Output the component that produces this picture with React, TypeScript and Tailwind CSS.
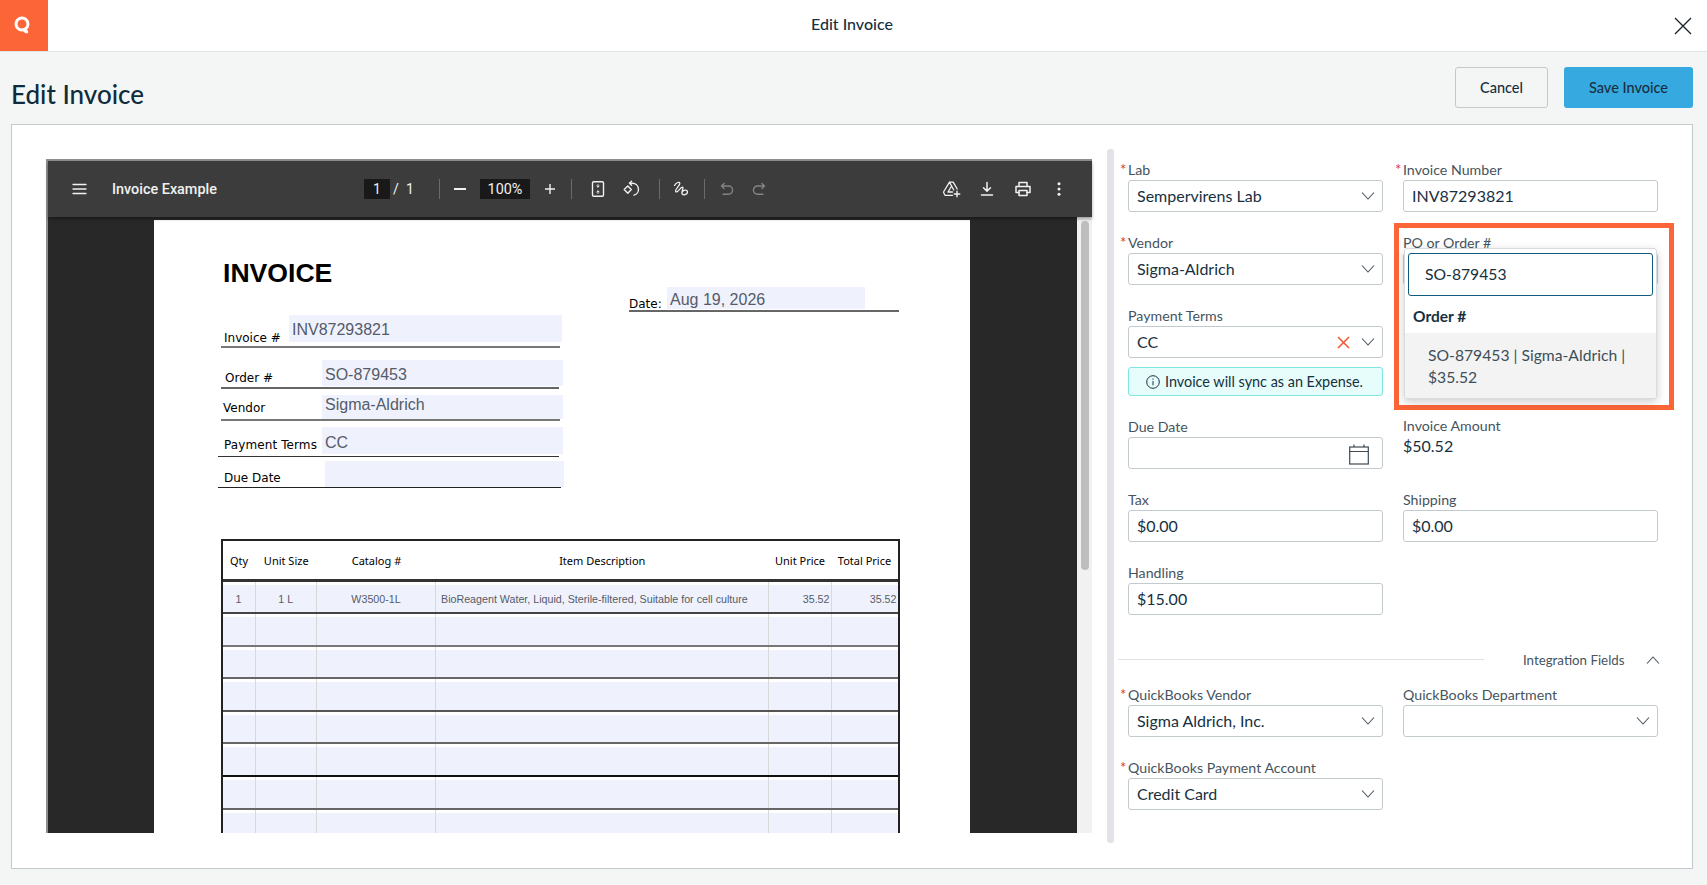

import React from "react";

const Chevron = ({ up = false }: { up?: boolean }) => (
  <svg width="14" height="8" viewBox="0 0 14 8" fill="none" stroke="#4a5760" strokeWidth="1.1" className="shrink-0">
    <polyline points={up ? "1,7.5 7,1 13,7.5" : "1,0.5 7,7 13,0.5"} />
  </svg>
);

const Field = ({ label, req, children }: { label: string; req?: boolean; children?: React.ReactNode }) => (
  <div className="flex flex-col">
    <div className="relative h-5 text-[14.2px] leading-5 text-[#46545e]">
      {req && <span className="absolute -left-[8px] -top-[1px] text-[15px] text-[#e1343f]">*</span>}
      {label}
    </div>
    {children}
  </div>
);

const Box = ({ value, chevron, children }: { value?: string; chevron?: boolean; children?: React.ReactNode }) => (
  <div className="flex h-8 items-center rounded-[3px] border border-[#c3cacd] bg-white pl-2 pr-[7px] text-[16px] text-[#17303f]">
    <span className="flex-1 truncate">{value}</span>
    {children}
    {chevron && <Chevron />}
  </div>
);

const Ico = ({ w = 18, cls = "", children }: { w?: number; cls?: string; children: React.ReactNode }) => (
  <svg width={w} height="18" viewBox={`0 0 ${w} 18`} fill="none" stroke="#f1f1f1" strokeWidth="1.4" strokeLinecap="round" strokeLinejoin="round" className={"shrink-0 " + cls}>
    {children}
  </svg>
);

const Sep = ({ cls }: { cls: string }) => <div className={"h-5 w-px bg-[#6a6a6a] " + cls} />;

const Toolbar = () => (
  <div className="relative z-10 flex h-[56px] shrink-0 items-center bg-[#3c3c3c] font-['Roboto',sans-serif] text-[14px] text-[#f1f1f1] shadow-[0_2px_3px_rgba(0,0,0,0.35)]">
    <Ico w={20} cls="ml-[22px]">
      <path d="M3 4.500h13M3 9h13M3 13.500h13" strokeWidth="1.3" />
    </Ico>
    <div className="ml-[22px] w-[252px] pt-px text-[14.400px] font-medium">Invoice Example</div>
    <div className="flex h-5 w-[26px] items-center justify-center bg-[#191919]">1</div>
    <div className="w-3 text-center">/</div>
    <div className="w-4 text-center">1</div>
    <Sep cls="ml-[21px]" />
    <div className="ml-[14px] h-[1.5px] w-3 bg-[#f1f1f1]" />
    <div className="ml-[14px] flex h-5 w-[50px] items-center justify-center bg-[#191919] pt-px text-[14.400px]">100%</div>
    <Ico w={12} cls="ml-[14px]">
      <path d="M1 9h10M6 4v10" strokeLinecap="butt" />
    </Ico>
    <Sep cls="ml-[15px]" />
    <Ico w={16} cls="ml-[18px]">
      <rect x="2.500" y="1.700" width="11" height="14.600" rx="1.200" />
      <path d="M8 4.600v2.400M6.800 6l1.200 1.200L9.200 6M8 13.400V11M6.800 12L8 10.800 9.200 12" strokeWidth="1" />
    </Ico>
    <Ico cls="ml-4">
      <path d="M5.800 6L9.300 9.600 5.800 13.200 2.200 9.600z" />
      <path d="M7.500 3.300h3a6 6 0 0 1 1.500 11.800" />
      <path d="M9.600 1.300L7.500 3.300l2.100 2" />
    </Ico>
    <Sep cls="ml-[19px]" />
    <Ico cls="ml-[13px]">
      <path d="M1.500 5.500C3 2.500 6.800 1.200 6.800 3.500 6.800 6 1.200 10 2.800 11.700 4.500 13.400 8.400 6 9.800 7.300c1.200 1.200-1.500 3.500-.8 6.200.6 2.300 5.500 1.300 5.500-1.500 0-2.500-4-2.500-5-.2" strokeWidth="1.300" />
    </Ico>
    <Sep cls="ml-[13px]" />
    <Ico w={16} cls="ml-[14px] opacity-40">
      <path d="M5 3.500L2.500 6 5 8.500M2.500 6h7a4 4 0 0 1 0 8.200H4" />
    </Ico>
    <Ico w={16} cls="ml-4 opacity-40">
      <path d="M11 3.500L13.500 6 11 8.500M13.500 6h-7a4 4 0 0 0 0 8.200H12" />
    </Ico>
    <div className="ml-auto flex items-center pr-[24px]">
      <Ico w={20}>
        <path d="M7.500 2.200h3.700L15.200 9M7.500 2.200L1.800 11.500a1.500 1.500 0 0 0 0 1.500l1.200 2.300h7.500M7.500 2.200L11.800 10M6 12h4.500M6 12l3-5" strokeWidth="1.300" />
        <path d="M15 11.200v5.600M12.200 14h5.600" />
      </Ico>
      <Ico cls="ml-[16px]">
        <path d="M9 2.500v8.500M5.500 7.700L9 11.200l3.500-3.500M3.500 15h11" strokeWidth="1.500" />
      </Ico>
      <Ico cls="ml-[18px]">
        <path d="M5 6V2.500h8V6M5 12.500H2V6.500h14v6h-3" strokeWidth="1.500" />
        <rect x="5" y="10.500" width="8" height="5" strokeWidth="1.500" />
      </Ico>
      <svg width="18" height="18" viewBox="0 0 18 18" fill="#f1f1f1" className="ml-[18px] shrink-0">
        <circle cx="9" cy="3.800" r="1.500" />
        <circle cx="9" cy="9" r="1.500" />
        <circle cx="9" cy="14.200" r="1.500" />
      </svg>
    </div>
  </div>
);

const docLabel = "font-['DejaVu_Sans',sans-serif] text-[12px] leading-none text-black";
const docValue = "font-['Liberation_Sans',sans-serif] text-[16px] leading-none text-[#555b68]";

const DocForm = () => (
  <div className="w-[346px] pt-[38px]">
    <div className="h-[30px] pl-[5px] font-['Liberation_Sans',sans-serif] text-[26.600px] font-bold leading-[30px] text-black">INVOICE</div>
    <div className="ml-[3px] mt-[27px] flex h-[33px] w-[339px] items-start border-b-2 border-[#777]">
      <div className={"w-[68px] pl-[3px] pt-[17px] " + docLabel}>Invoice #</div>
      <div className={"-mr-[2px] flex h-[27px] w-[273px] items-start bg-[#eff2fd] pl-[3px] pt-[7px] " + docValue}>INV87293821</div>
    </div>
    <div className="ml-[3px] mt-3 flex h-[29px] w-[338px] items-start border-b-2 border-[#666]">
      <div className={"w-[101px] pl-1 pt-[12px] " + docLabel}>Order #</div>
      <div className={"-mr-[4px] flex h-[26px] w-[241px] items-start bg-[#eff2fd] pl-[3px] pt-[7px] " + docValue}>SO-879453</div>
    </div>
    <div className="ml-[3px] mt-[6px] flex h-[26px] w-[339px] items-start border-b-2 border-[#777]">
      <div className={"w-[101px] pl-[2px] pt-[7px] " + docLabel}>Vendor</div>
      <div className={"-mr-[3px] flex h-6 w-[241px] items-start bg-[#eff2fd] pl-[3px] pt-[2px] " + docValue}>Sigma-Aldrich</div>
    </div>
    <div className="mt-[6px] flex h-[30px] w-[341px] items-start border-b-[1.5px] border-[#333]">
      <div className={"w-[104px] pl-[6px] pt-[12px] tracking-[0.1px] " + docLabel}>Payment Terms</div>
      <div className={"-mr-1 flex h-[27px] w-[241px] items-start bg-[#eff2fd] pl-[3px] pt-[8px] " + docValue}>CC</div>
    </div>
    <div className="mt-1 flex h-[26.500px] w-[343px] items-start border-b border-[#222]">
      <div className={"w-[107px] pl-[6px] pt-[11px] " + docLabel}>Due Date</div>
      <div className="-mr-[3px] h-[26px] w-[239px] bg-[#eff2fd]" />
    </div>
  </div>
);

const cols = "grid grid-cols-[33px_61.5px_119px_332.5px_63px_1fr]";
const cellBorder = "border-r border-[#d9d9d9] last:border-r-0";

const Row = ({ vals, line }: { vals?: string[]; line: string }) => (
  <div className={cols + " h-[32.600px] border-b-2 bg-white " + line}>
    {[0, 1, 2, 3, 4, 5].map((i) => (
      <div key={i} className={"pt-[3px] " + cellBorder}>
        <div
          className={
            "flex h-full items-center bg-[#eff2fd] pt-[2px] font-['Liberation_Sans',sans-serif] text-[10.700px] text-[#555b68] " +
            (i === 3 ? "justify-start pl-[5px]" : i > 3 ? "justify-end pr-px" : "justify-center")
          }
        >
          {vals ? vals[i] : ""}
        </div>
      </div>
    ))}
  </div>
);

const Table = () => (
  <div className="ml-[66.500px] mt-[51px] w-[679px] border-x-2 border-t-2 border-[#222]">
    <div className={cols + " h-[41px] items-center border-b-[3px] border-[#333] pt-[3px] font-['Noto_Sans',sans-serif] text-[11px] text-black"}>
      <div className="text-center">Qty</div>
      <div className="text-center">Unit Size</div>
      <div className="text-center">Catalog #</div>
      <div className="text-center">Item Description</div>
      <div className="text-center">Unit Price</div>
      <div className="text-center">Total Price</div>
    </div>
    <Row vals={["1", "1 L", "W3500-1L", "BioReagent Water, Liquid, Sterile-filtered, Suitable for cell culture", "35.52", "35.52"]} line="border-[#444]" />
    <Row line="border-[#777]" />
    <Row line="border-[#666]" />
    <Row line="border-[#555]" />
    <Row line="border-[#666]" />
    <Row line="border-[#111]" />
    <Row line="border-[#666]" />
    <Row line="border-[#666]" />
  </div>
);

const PdfViewer = () => (
  <div className="mt-[10px] flex h-[674px] w-[1046px] shrink-0 flex-col border-l-2 border-t-2 border-[#8e8e8e]">
    <Toolbar />
    <div className="flex min-h-0 flex-1">
      <div className="min-h-0 flex-1 overflow-hidden bg-[#282828] pl-[106px] pt-[3px]">
        <div className="h-[800px] w-[816px] bg-white">
          <div className="flex pl-16">
            <DocForm />
            <div className="ml-[65px] flex h-[92px] w-[270px] items-start pt-[67px]">
              <div className="flex h-[25px] w-full items-start border-b-2 border-[#666]">
                <div className={"w-[38px] pt-[11px] " + docLabel}>Date:</div>
                <div className={"flex h-[22px] w-[198px] items-start bg-[#eff2fd] pl-[3px] pt-[5px] " + docValue}>Aug 19, 2026</div>
              </div>
            </div>
          </div>
          <Table />
        </div>
      </div>
      <div className="w-[15px] shrink-0 bg-[#f1f1f1] pl-1 pt-1">
        <div className="h-[349px] w-2 rounded-[4px] bg-[#bdbdbd]" />
      </div>
    </div>
  </div>
);

const Form = () => (
  <div className="ml-[14px] w-[530px] pt-[11px]">
    <div className="grid grid-cols-[255px_255px] gap-x-5 gap-y-[21px]">
      <Field label="Lab" req>
        <Box value="Sempervirens Lab" chevron />
      </Field>
      <Field label="Invoice Number" req>
        <Box value="INV87293821" />
      </Field>
      <Field label="Vendor" req>
        <Box value="Sigma-Aldrich" chevron />
      </Field>
      <div className="relative">
        <Field label="PO or Order #">
          <Box />
        </Field>
        <div className="absolute -left-[9px] -top-[10px] h-[187px] w-[280px] border-[5px] border-[#fb6538]" />
        <div className="absolute left-px top-[15px] w-[253px] overflow-hidden rounded-[3px] border border-[#d8dcde] bg-white shadow-[0_3px_10px_rgba(0,0,0,0.2)]">
          <div className="mx-[3px] mt-1 flex h-[43px] items-center rounded-[3px] border border-[#0f5b80] pl-4 text-[15.700px] text-[#17303f]">SO-879453</div>
          <div className="flex h-[37px] items-center pl-2 pt-[4px] text-[15.500px] font-bold text-[#17303f]">Order #</div>
          <div className="h-[65px] bg-[#f3f3f4] pl-[23px] pr-4 pt-[11px] text-[15.700px] leading-[22px] text-[#3d4f5a]">SO-879453 | Sigma-Aldrich | $35.52</div>
        </div>
      </div>
      <Field label="Payment Terms">
        <Box value="CC" chevron>
          <svg width="13" height="13" viewBox="0 0 13 13" stroke="#ef5a33" strokeWidth="1.600" className="mr-[11px] shrink-0">
            <path d="M1 1l11 11M12 1L1 12" />
          </svg>
        </Box>
        <div className="mt-[9px] flex h-[29px] items-center justify-center gap-[5px] rounded-[3px] border border-[#7ce6df] bg-[#e6fdfb] pr-[2px] text-[14.400px] text-[#17303f]">
          <svg width="14" height="14" viewBox="0 0 14 14" fill="none" stroke="#17303f" strokeWidth="1" className="shrink-0">
            <circle cx="7" cy="7" r="6.300" />
            <path d="M7 6v4.300M7 3.500v1.200" />
          </svg>
          Invoice will sync as an Expense.
        </div>
      </Field>
      <div />
      <Field label="Due Date">
        <Box>
          <svg width="20" height="21" viewBox="0 0 20 21" fill="none" stroke="#3d4a52" strokeWidth="1.200" className="mr-[6px] mt-[2px] shrink-0">
            <rect x="0.700" y="3" width="18.600" height="17" />
            <path d="M0.700 7.500h18.600M5 0.500V3M15 0.500V3" />
          </svg>
        </Box>
      </Field>
      <div className="-mt-px">
        <Field label="Invoice Amount">
          <div className="text-[16px] leading-5 text-[#17303f]">$50.52</div>
        </Field>
      </div>
      <Field label="Tax">
        <Box value="$0.00" />
      </Field>
      <Field label="Shipping">
        <Box value="$0.00" />
      </Field>
      <Field label="Handling">
        <Box value="$15.00" />
      </Field>
    </div>
    <div className="-ml-[10px] mt-[33px] flex h-[22px] items-center whitespace-nowrap">
      <div className="h-px w-[366px] shrink-0 bg-[#dfe2e4]" />
      <div className="ml-[39px] shrink-0 pt-[3px] text-[13.300px] text-[#46545e]">Integration Fields</div>
      <div className="ml-[22px] shrink-0 pt-[1px]">
        <Chevron up />
      </div>
    </div>
    <div className="mt-[15px] grid grid-cols-[255px_255px] gap-x-5 gap-y-[21px]">
      <Field label="QuickBooks Vendor" req>
        <Box value="Sigma Aldrich, Inc." chevron />
      </Field>
      <Field label="QuickBooks Department">
        <Box chevron />
      </Field>
      <Field label="QuickBooks Payment Account" req>
        <Box value="Credit Card" chevron />
      </Field>
    </div>
  </div>
);

export default function App() {
  return (
    <div className="flex h-[885px] w-[1707px] flex-col overflow-hidden bg-[#f4f6f6] font-['Lato',sans-serif] text-[#17303f]">
      <header className="flex h-[52px] shrink-0 items-start border-b border-[#e1e4e5] bg-white">
        <div className="flex h-[51px] w-12 shrink-0 items-center justify-center bg-[#fb6538] pr-1 pb-[2px]">
          <svg width="18" height="20" viewBox="0 0 18 20" fill="none" stroke="#fff" strokeWidth="3">
            <circle cx="9" cy="9" r="6" />
            <path d="M10 13.500c1 2 3 3.500 5 3.300" />
          </svg>
        </div>
        <div className="flex h-[51px] flex-1 items-center justify-center pb-1 pr-[3px] text-[16px] font-medium text-[#17303f]">Edit Invoice</div>
        <div className="flex h-[51px] w-[48px] items-center justify-center">
          <svg width="18" height="18" viewBox="0 0 18 18" stroke="#17232b" strokeWidth="1.300">
            <path d="M1 1l16 16M17 1L1 17" />
          </svg>
        </div>
      </header>
      <div className="flex h-[72px] shrink-0 items-start pl-[11px] pr-[14px] pt-[15px]">
        <h1 className="flex-1 pt-[12px] text-[26px] font-medium leading-[30px] text-[#0f2c3c]">Edit Invoice</h1>
        <button className="h-[41px] w-[93px] rounded-[3px] border border-[#c3cacd] text-[14.500px] font-medium text-[#17303f]">Cancel</button>
        <button className="ml-4 h-[41px] w-[129px] rounded-[3px] bg-[#36a9e0] text-[14.500px] font-medium text-[#17303f]">Save Invoice</button>
      </div>
      <main className="mx-[11px] flex h-[745px] w-[1682px] shrink-0 items-start border border-[#c3cacd] bg-white pl-[34px] pt-6">
        <PdfViewer />
        <div className="ml-[15px] h-[694px] w-[7px] shrink-0 rounded-[3px] bg-[#e1e3e6]" />
        <Form />
      </main>
    </div>
  );
}
